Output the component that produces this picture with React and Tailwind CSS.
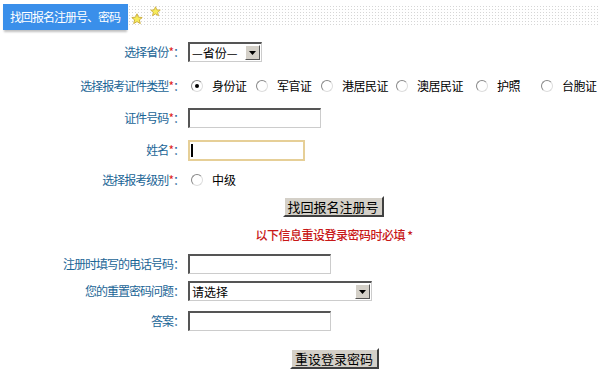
import React from 'react';

const font = { fontFamily: '"Noto Sans CJK SC", "DejaVu Sans", sans-serif' };

const Star = ({ className }) => (
  <svg viewBox="0 0 12 12" className={className}>
    <path
      d="M6 0.8 L7.5 4.2 L11.2 4.5 L8.4 6.9 L9.3 10.6 L6 8.6 L2.7 10.6 L3.6 6.9 L0.8 4.5 L4.5 4.2 Z"
      fill="#f6ec5a"
      stroke="#c9a93a"
      strokeWidth="0.9"
      strokeLinejoin="round"
    />
  </svg>
);

const Radio = ({ checked }) => (
  <span className="inline-flex shrink-0 items-center justify-center w-[12px] h-[12px] rounded-full bg-white border border-t-[#888] border-l-[#888] border-r-[#ddd] border-b-[#ddd]">
    {checked && <span className="w-[4px] h-[4px] rounded-full bg-black" />}
  </span>
);

const TextBox = ({ width, focused }) =>
  focused ? (
    <div className={`${width} h-[21px] border-2 border-[#e6cf97] bg-white flex items-center pl-[1px]`}>
      <span className="w-[2px] h-[13px] bg-black" />
    </div>
  ) : (
    <div className={`${width} h-[20px] bg-white border border-t-2 border-l-2 border-t-[#555] border-l-[#555] border-r-[#ccc] border-b-[#ccc]`} />
  );

const Select = ({ width, text }) => (
  <div className={`${width} h-[20px] bg-white flex items-center border border-t-2 border-l-2 border-t-[#555] border-l-[#555] border-r-[#ccc] border-b-[#ccc]`}>
    <span className="flex-1 text-[12px] text-black pl-[2px] leading-none whitespace-nowrap">{text}</span>
    <span className="w-[15px] h-[15px] mr-[1px] bg-[#d4d0c8] flex items-center justify-center border border-t-white border-l-white border-r-[#555] border-b-[#555]">
      <svg viewBox="0 0 7 4" className="w-[7px] h-[4px]">
        <path d="M0 0 H7 L3.5 4 Z" fill="#000" />
      </svg>
    </span>
  </div>
);

const Label = ({ text, required = true }) => (
  <div className="w-[184px] shrink-0 text-right text-[12px] tracking-[-1px] text-[#1b6596] leading-none whitespace-nowrap">
    {text}
    {required && <span className="text-[#e02020]">*</span>}
    <span>：</span>
  </div>
);

const Button = ({ children, width }) => (
  <button className={`${width} h-[21px] bg-[#d4d0c8] text-[13px] text-black leading-none whitespace-nowrap border-2 border-t-white border-l-white border-r-[#404040] border-b-[#404040]`}>
    {children}
  </button>
);

const idTypes = [
  { label: '身份证', checked: true, w: 'w-[65px]' },
  { label: '军官证', w: 'w-[65px]' },
  { label: '港居民证', w: 'w-[75px]' },
  { label: '澳居民证', w: 'w-[80px]' },
  { label: '护照', w: 'w-[65px]' },
  { label: '台胞证', w: 'w-[58px]' },
];

export default function App() {
  return (
    <div className="w-[600px] h-[380px] bg-white overflow-hidden" style={font}>
      {/* Header */}
      <div className="h-[34px] flex items-start pt-[4px]">
        <div className="ml-[3px] w-[125px] shrink-0 h-[26px] bg-[#3a8fea] text-white text-[12px] tracking-[-1px] flex items-center pl-[7px] shadow-[0_3px_2px_-1px_rgba(0,0,0,0.25)] whitespace-nowrap">
          找回报名注册号、密码
        </div>
        <div className="flex-1 h-[22px] mt-[1px] flex items-start bg-[radial-gradient(#d6d6d6_0.8px,transparent_0.9px)] bg-[length:3px_3px]">
          <Star className="w-[12px] h-[12px] mt-[8px] ml-[3px]" />
          <Star className="w-[11px] h-[11px] mt-[1px] ml-[7px]" />
        </div>
      </div>

      {/* Province */}
      <div className="h-[36px] flex items-center">
        <Label text="选择省份" />
        <div className="ml-[4px]">
          <Select width="w-[74px]" text="—省份—" />
        </div>
      </div>

      {/* ID type */}
      <div className="h-[32px] flex items-center">
        <Label text="选择报考证件类型" />
        <div className="ml-[7px] flex items-center text-[12px] tracking-[-0.5px] text-black">
          {idTypes.map((t) => (
            <div key={t.label} className={`${t.w} flex items-center`}>
              <Radio checked={t.checked} />
              <span className="ml-[9px] whitespace-nowrap">{t.label}</span>
            </div>
          ))}
        </div>
      </div>

      {/* ID number */}
      <div className="h-[32px] flex items-center">
        <Label text="证件号码" />
        <div className="ml-[4px]">
          <TextBox width="w-[133px]" />
        </div>
      </div>

      {/* Name */}
      <div className="h-[32px] flex items-center">
        <Label text="姓名" />
        <div className="ml-[4px]">
          <TextBox width="w-[117px]" focused />
        </div>
      </div>

      {/* Level */}
      <div className="h-[28px] flex items-center">
        <Label text="选择报考级别" />
        <div className="ml-[7px] flex items-center text-[12px] text-black">
          <Radio />
          <span className="ml-[9px]">中级</span>
        </div>
      </div>

      <div className="h-[24px] flex items-center justify-center pl-[66px]">
        <Button width="w-[101px]">找回报名注册号</Button>
      </div>

      <div className="h-[34px] flex items-center justify-center pl-[68px] text-[12px] tracking-[-0.5px] text-[#c81818] font-medium">
        以下信息重设登录密码时必填 *
      </div>

      {/* Phone */}
      <div className="h-[24px] flex items-center">
        <Label text="注册时填写的电话号码" required={false} />
        <div className="ml-[4px]">
          <TextBox width="w-[143px]" />
        </div>
      </div>

      {/* Question */}
      <div className="h-[30px] flex items-center">
        <Label text="您的重置密码问题" required={false} />
        <div className="ml-[4px]">
          <Select width="w-[184px]" text="请选择" />
        </div>
      </div>

      {/* Answer */}
      <div className="h-[30px] flex items-center">
        <Label text="答案" required={false} />
        <div className="ml-[4px]">
          <TextBox width="w-[143px]" />
        </div>
      </div>

      <div className="h-[44px] flex items-center justify-center pl-[68px]">
        <Button width="w-[89px]">重设登录密码</Button>
      </div>
    </div>
  );
}
